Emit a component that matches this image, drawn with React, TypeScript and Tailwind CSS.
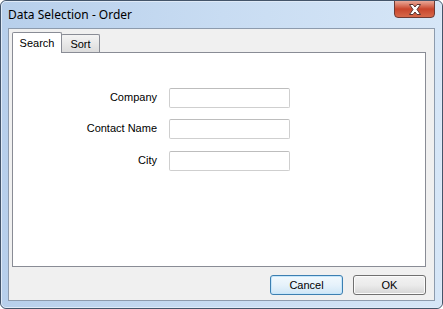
import React from "react";

export default function App() {
  const ui = { fontFamily: '"Liberation Sans", Arial, sans-serif' };
  return (
    <div className="w-[443px] h-[309px] bg-white">
      <div className="relative w-[443px] h-[309px] rounded-[6px] border border-[#44556a] bg-gradient-to-r from-[#b7cfeb] via-[#c8dcf2] to-[#d6e6f7] flex flex-col overflow-hidden">
        <div className="absolute inset-0 rounded-[5px] border border-[#dfeaf7] pointer-events-none" />
        {/* title bar */}
        <div className="h-[27px] flex items-center pl-[7px] shrink-0">
          <span className="text-[12px] text-black leading-none" style={{ fontFamily: '"Noto Sans", "Open Sans", sans-serif' }}>
            Data Selection - Order
          </span>
        </div>
        {/* close button */}
        <div className="absolute top-[-1px] right-[7px] w-[41px] h-[18px] rounded-b-[4px] border border-[#6e3a34] bg-gradient-to-b from-[#e8a898] via-[#c8452c] to-[#d7684a] flex items-center justify-center">
          <svg width="14" height="11" viewBox="0 0 14 11">
            <path
              d="M1.5 0.5 H5 L7 3 L9 0.5 H12.5 L9 5.5 L12.5 10.5 H9 L7 8 L5 10.5 H1.5 L5 5.5 Z"
              fill="#ffffff"
              stroke="#5a3430"
              strokeWidth="1"
              strokeLinejoin="round"
            />
          </svg>
        </div>
        {/* client area */}
        <div className="mx-[7px] mb-[7px] flex-1 border border-[#8d9bad] bg-[#f0f0f0] flex flex-col pl-[3px] pt-[3px]" style={ui}>
          {/* tabs */}
          <div className="flex items-end h-[20px] relative z-10">
            <div className="w-[50px] h-[21px] -mb-px bg-white border border-b-0 border-[#898c95] rounded-t-[2px] flex items-center justify-center text-[11px] text-black pt-[1px]">
              Search
            </div>
            <div className="-ml-px w-[39px] h-[18px] bg-gradient-to-b from-[#f4f4f4] to-[#dcdcdc] border border-b-0 border-[#898c95] rounded-t-[2px] flex items-center justify-center text-[11px] text-black pt-[2px]">
              Sort
            </div>
          </div>
          {/* panel */}
          <div className="w-[414px] h-[215px] bg-white border border-[#898c95] pt-[35px] flex flex-col">
            <div className="flex items-center h-[20px]">
              <div className="w-[144px] text-right text-[11px] text-black -mt-[2px]">Company</div>
              <div className="ml-[12px] w-[121px] h-[20px] border border-[#cfcfcf] border-t-[#bdbdbd] rounded-[2px] bg-white" />
            </div>
            <div className="flex items-center h-[20px] mt-[11px]">
              <div className="w-[144px] text-right text-[11px] text-black -mt-[2px]">Contact Name</div>
              <div className="ml-[12px] w-[121px] h-[20px] border border-[#cfcfcf] border-t-[#bdbdbd] rounded-[2px] bg-white" />
            </div>
            <div className="flex items-center h-[20px] mt-[12px]">
              <div className="w-[144px] text-right text-[11px] text-black -mt-[2px]">City</div>
              <div className="ml-[12px] w-[121px] h-[20px] border border-[#cfcfcf] border-t-[#bdbdbd] rounded-[2px] bg-white" />
            </div>
          </div>
          {/* buttons */}
          <div className="w-[414px] mt-[8px] flex justify-end gap-[10px]">
            <div className="w-[73px] h-[20px] rounded-[3px] border border-[#3c7fb1] shadow-[inset_0_0_0_1px_#c5e6fb] bg-gradient-to-b from-[#f2f9fd] via-[#e6f2fb] to-[#cfe6f6] flex items-center justify-center text-[11px] text-black">
              Cancel
            </div>
            <div className="w-[73px] h-[20px] rounded-[3px] border border-[#707070] shadow-[inset_0_0_0_1px_#fbfbfb] bg-gradient-to-b from-[#f2f2f2] via-[#ebebeb] to-[#d5d5d5] flex items-center justify-center text-[11px] text-black">
              OK
            </div>
          </div>
        </div>
      </div>
    </div>
  );
}
